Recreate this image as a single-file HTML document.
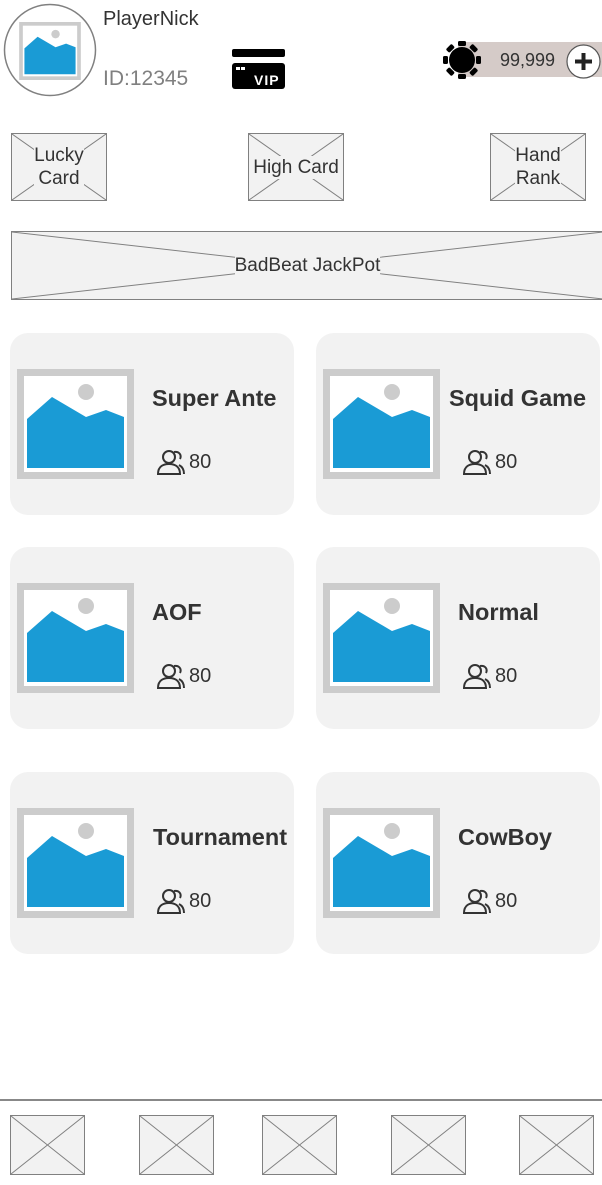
<!DOCTYPE html>
<html><head><meta charset="utf-8"><style>
*{margin:0;padding:0;box-sizing:border-box}
body{width:602px;height:1185px;background:#fff;position:relative;overflow:hidden;font-family:"Liberation Sans",Arial,sans-serif;color:#333}
.a{position:absolute}
.ph{position:absolute;background:#f2f2f2;border:1.5px solid #808080;display:flex;align-items:center;justify-content:center;text-align:center;font-size:19px;color:#333;line-height:23px}
.ph svg{position:absolute;left:0;top:0;width:100%;height:100%}
.ph span{position:relative;background:#f2f2f2}
.card{position:absolute;width:284px;height:182px;background:#f2f2f2;border-radius:18px}
.card .img{position:absolute;left:7px;top:36px;width:117px;height:110px}
.card .t{position:absolute;top:52px;font-weight:bold;font-size:23.5px;color:#333}
.card .u{position:absolute;left:146px;top:116px;width:30px;height:27px}
.card .n{position:absolute;left:179px;top:118px;font-size:20px;color:#333}
</style></head><body>
<svg width="0" height="0" style="position:absolute"><defs>
<symbol id="im" viewBox="0 0 117 110"><rect width="117" height="110" fill="#cccccc"/><rect x="7" y="7" width="103" height="96" fill="#fff"/><polygon points="10,50 35,28 69,48 89,41 107,48 107,99 10,99" fill="#1a9bd5"/><circle cx="69" cy="23" r="8" fill="#cccccc"/></symbol>
<symbol id="us" viewBox="0 0 30 27"><circle cx="13" cy="8" r="6" fill="none" stroke="#333" stroke-width="2"/><path d="M2 25 C2 17 8 15 13 15 C18 15 24 17 24 25 Z" fill="none" stroke="#333" stroke-width="2"/><path d="M18 3 C23 2 26 6 24 10 M23 16 C27 18 28 21 28 25" fill="none" stroke="#333" stroke-width="2"/></symbol>
</defs></svg>

<svg class="a" style="left:3px;top:3px" width="94" height="94"><circle cx="47" cy="47" r="45.5" fill="#fff" stroke="#808080" stroke-width="1.5"/><use href="#im" x="16" y="19" width="62" height="58"/></svg>
<div class="a" style="left:103px;top:8px;font-size:20px;color:#333">PlayerNick</div>
<div class="a" style="left:103px;top:67px;font-size:21px;color:#808080">ID:12345</div>
<svg class="a" style="left:232px;top:48px" width="54" height="42"><rect x="0" y="1" width="53" height="8" rx="2" fill="#000"/><rect x="0" y="15" width="53" height="26" rx="3" fill="#000"/><rect x="4" y="19" width="4" height="3" fill="#fff"/><rect x="9" y="19" width="4" height="3" fill="#fff"/><text x="22" y="37" font-family="Liberation Sans" font-weight="bold" font-size="14" fill="#fff" letter-spacing="1">VIP</text></svg>
<div class="a" style="left:458px;top:42px;width:144px;height:35px;background:#d5cbc8"></div>
<svg class="a" style="left:442px;top:40px" width="40" height="40"><g transform="translate(20,20)" fill="#000"><circle r="13"/><g id="s"><rect x="-4" y="-19" width="8" height="5" rx="1.5"/></g><use href="#s" transform="rotate(45)"/><use href="#s" transform="rotate(90)"/><use href="#s" transform="rotate(135)"/><use href="#s" transform="rotate(180)"/><use href="#s" transform="rotate(225)"/><use href="#s" transform="rotate(270)"/><use href="#s" transform="rotate(315)"/></g></svg>
<div class="a" style="left:500px;top:50px;font-size:18px;color:#333">99,999</div>
<svg class="a" style="left:566px;top:44px" width="35" height="35"><circle cx="17.5" cy="17.5" r="16.5" fill="#fff" stroke="#555" stroke-width="1.2"/><path d="M17.5 9v17M9 17.5h17" stroke="#222" stroke-width="4"/></svg>

<div class="ph" style="left:11px;top:133px;width:96px;height:68px"><svg viewBox="0 0 96 68" preserveAspectRatio="none"><path d="M0 0L96 68M96 0L0 68" stroke="#808080" stroke-width="1"/></svg><span>Lucky<br>Card</span></div>
<div class="ph" style="left:248px;top:133px;width:96px;height:68px"><svg viewBox="0 0 96 68" preserveAspectRatio="none"><path d="M0 0L96 68M96 0L0 68" stroke="#808080" stroke-width="1"/></svg><span>High Card</span></div>
<div class="ph" style="left:490px;top:133px;width:96px;height:68px"><svg viewBox="0 0 96 68" preserveAspectRatio="none"><path d="M0 0L96 68M96 0L0 68" stroke="#808080" stroke-width="1"/></svg><span>Hand<br>Rank</span></div>
<div class="ph" style="left:11px;top:231px;width:593px;height:69px"><svg viewBox="0 0 593 69" preserveAspectRatio="none"><path d="M0 0L593 69M593 0L0 69" stroke="#808080" stroke-width="1"/></svg><span>BadBeat JackPot</span></div>

<div class="card" style="left:10px;top:333px"><svg class="img"><use href="#im" width="117" height="110"/></svg><div class="t" style="left:142px">Super Ante</div><svg class="u"><use href="#us"/></svg><div class="n">80</div></div>
<div class="card" style="left:316px;top:333px"><svg class="img"><use href="#im" width="117" height="110"/></svg><div class="t" style="left:133px">Squid Game</div><svg class="u"><use href="#us"/></svg><div class="n">80</div></div>
<div class="card" style="left:10px;top:547px"><svg class="img"><use href="#im" width="117" height="110"/></svg><div class="t" style="left:142px">AOF</div><svg class="u"><use href="#us"/></svg><div class="n">80</div></div>
<div class="card" style="left:316px;top:547px"><svg class="img"><use href="#im" width="117" height="110"/></svg><div class="t" style="left:142px">Normal</div><svg class="u"><use href="#us"/></svg><div class="n">80</div></div>
<div class="card" style="left:10px;top:772px"><svg class="img"><use href="#im" width="117" height="110"/></svg><div class="t" style="left:143px">Tournament</div><svg class="u"><use href="#us"/></svg><div class="n">80</div></div>
<div class="card" style="left:316px;top:772px"><svg class="img"><use href="#im" width="117" height="110"/></svg><div class="t" style="left:142px">CowBoy</div><svg class="u"><use href="#us"/></svg><div class="n">80</div></div>

<div class="a" style="left:0;top:1099px;width:602px;height:2px;background:#888"></div>
<div class="ph" style="left:10px;top:1115px;width:75px;height:60px"><svg viewBox="0 0 75 60" preserveAspectRatio="none"><path d="M0 0L75 60M75 0L0 60" stroke="#808080" stroke-width="1"/></svg></div>
<div class="ph" style="left:139px;top:1115px;width:75px;height:60px"><svg viewBox="0 0 75 60" preserveAspectRatio="none"><path d="M0 0L75 60M75 0L0 60" stroke="#808080" stroke-width="1"/></svg></div>
<div class="ph" style="left:262px;top:1115px;width:75px;height:60px"><svg viewBox="0 0 75 60" preserveAspectRatio="none"><path d="M0 0L75 60M75 0L0 60" stroke="#808080" stroke-width="1"/></svg></div>
<div class="ph" style="left:391px;top:1115px;width:75px;height:60px"><svg viewBox="0 0 75 60" preserveAspectRatio="none"><path d="M0 0L75 60M75 0L0 60" stroke="#808080" stroke-width="1"/></svg></div>
<div class="ph" style="left:519px;top:1115px;width:75px;height:60px"><svg viewBox="0 0 75 60" preserveAspectRatio="none"><path d="M0 0L75 60M75 0L0 60" stroke="#808080" stroke-width="1"/></svg></div>
</body></html>
